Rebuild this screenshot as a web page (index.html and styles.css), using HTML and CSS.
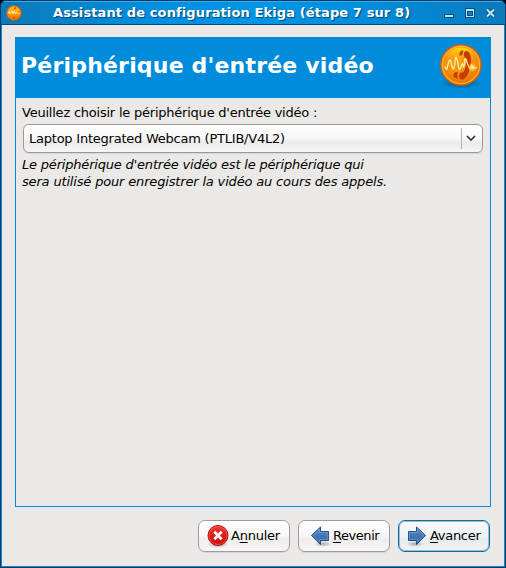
FILE: index.html
```html
<!DOCTYPE html>
<html lang="fr">
<head>
<meta charset="utf-8">
<title>Assistant de configuration Ekiga</title>
<link rel="stylesheet" href="styles.css">
</head>
<body>
<svg width="0" height="0" class="defs" aria-hidden="true">
  <defs>
    <radialGradient id="coin" cx=".45" cy=".3" r=".8"><stop offset="0" stop-color="#f9a51c"/><stop offset=".55" stop-color="#f48c0c"/><stop offset="1" stop-color="#dc6300"/></radialGradient>
    <linearGradient id="gloss" x1="0" y1="0" x2="0" y2="1"><stop offset="0" stop-color="#ffe000" stop-opacity=".95"/><stop offset="1" stop-color="#ffb520" stop-opacity=".1"/></linearGradient>
    <radialGradient id="shade"><stop offset="0" stop-color="#003050" stop-opacity=".6"/><stop offset="1" stop-color="#003050" stop-opacity="0"/></radialGradient>
    <radialGradient id="glow"><stop offset="0" stop-color="#fffbd0"/><stop offset=".3" stop-color="#ffe070" stop-opacity=".8"/><stop offset="1" stop-color="#ffc030" stop-opacity="0"/></radialGradient>
    <linearGradient id="red" x1="0" y1="0" x2="0" y2="1"><stop offset="0" stop-color="#ee4238"/><stop offset=".5" stop-color="#e01b14"/><stop offset="1" stop-color="#cc0d0a"/></linearGradient>
    <linearGradient id="blue" x1="0" y1="0" x2="0" y2="1"><stop offset="0" stop-color="#5b8dc8"/><stop offset="1" stop-color="#2e5f9f"/></linearGradient>
    <radialGradient id="soft"><stop offset="0" stop-color="#000" stop-opacity=".3"/><stop offset="1" stop-color="#000" stop-opacity="0"/></radialGradient>
  </defs>
</svg>
<div class="window">
  <header class="titlebar">
    <svg class="app-icon" width="16" height="16" viewBox="0 0 16 16"><circle cx="8" cy="8" r="7.4" fill="url(#coin)" stroke="#c65c00" stroke-width=".8"/><ellipse cx="8" cy="5.2" rx="5" ry="3.5" fill="#ffc22c" opacity=".6"/><path d="M9.8 2.5 8.5 4M7 13l2-1" stroke="#d04800" stroke-width="1.4"/><path d="M2 8.5 3 6.5l1.2 2.5L6 6l1 3 1.3-2.5L9.5 9l1.2-1.7L12 8.7h2" fill="none" stroke="#fff0a0" stroke-width=".9"/></svg>
    <h1>Assistant de configuration Ekiga (étape 7 sur 8)</h1>
    <svg class="controls" width="56" height="14" viewBox="0 0 56 14">
      <path fill="#064f80" d="M1 8h10v4H1zM22 2h10v10H22z"/>
      <path d="M44 3.500l7 7M51 3.500l-7 7" stroke="#075587" stroke-width="4"/>
      <path fill="#b9e0f5" d="M2 9h8v2H2z"/>
      <path fill="#b9e0f5" d="M23 3h8v8h-8z"/><path fill="#064f80" d="M24 5h6v5h-6z"/><path fill="#0881c7" d="M25 6h4v3h-4z"/>
      <path d="M44 3.500l7 7M51 3.500l-7 7" stroke="#c7e8f8" stroke-width="2"/>
    </svg>
  </header>
  <main class="content">
    <section class="page">
      <div class="banner">
        <h2>Périphérique d'entrée vidéo</h2>
        <svg class="logo" width="48" height="48" viewBox="0 0 48 48">
          <ellipse cx="24" cy="41" rx="21" ry="6" fill="url(#shade)"/>
          <circle cx="24" cy="23" r="20.2" fill="url(#coin)" stroke="#d35b05" stroke-width="1.2"/>
          <circle cx="24" cy="23" r="18.6" fill="none" stroke="#ffb62f" stroke-width="1.1"/>
          <path d="M8.5 16C12 8.5 18 5.5 24 5.5S36 8.500 39.500 16C34 19 29 14 22 15.500S12 17 8.500 16Z" fill="url(#gloss)"/>
          <path d="M27.500 10C30 7.300 34.500 10.500 34 19C33.500 29 29.500 37.500 25 37.700C21.500 37.500 21 31.500 24.500 30.500C27.500 31.500 29.500 24 29.300 16.500C27.500 16.500 26 12.500 27.500 10Z" fill="#c93b00"/>
          <path d="M22.500 13.500C22 10.500 23.500 8 26.500 8.500L25 13.500ZM17 35C15.500 31 18 29.500 21 30.500C20 33 20 34.500 21 37Z" fill="#c93b00"/>
          <path d="M8 24.500C9 27 9.500 28 10 26.500C11 23 11.500 18 13 18C15 19 14 27 16.500 27C18.500 24 17.500 15.500 19 15.500C21.500 18 21 26.500 22.500 27.500C24.500 27 24 22 25.500 21.500L26.500 25C28 24 27 17 28.500 16.500C30 19 31 25 33 26.500L34.500 23L36.500 25.500L40 26" fill="none" stroke="#fff0a0" stroke-width="1.3"/>
          <circle cx="35.500" cy="25.500" r="5" fill="url(#glow)"/>
        </svg>
      </div>
      <div class="form">
        <p class="label">Veuillez choisir le périphérique d'entrée vidéo :</p>
        <button class="combo" type="button"><span class="combo-text">Laptop Integrated Webcam (PTLIB/V4L2)</span><span class="combo-arrow"><svg width="10" height="7" viewBox="0 0 10 7"><path d="M1 1l4 4 4-4" fill="none" stroke="#303030" stroke-width="1.6"/></svg></span></button>
        <p class="hint"><span class="line line-one">Le périphérique d'entrée vidéo est le périphérique qui</span><span class="line line-two">sera utilisé pour enregistrer la vidéo au cours des appels.</span></p>
      </div>
    </section>
    <footer class="actions">
      <button type="button" class="action cancel"><svg width="24" height="24" viewBox="0 0 24 24"><ellipse cx="12" cy="20.500" rx="11" ry="3.500" fill="url(#soft)"/><circle cx="12" cy="11.500" r="10" fill="url(#red)" stroke="#b00c0c"/><circle cx="12" cy="11.500" r="9" fill="none" stroke="#f26b5e" stroke-width=".7"/><path d="M8.300 7.800l7.400 7.400M15.700 7.800l-7.400 7.400" stroke="#fff" stroke-width="2.700"/></svg><span class="annuler">A<u>n</u>nuler</span></button>
      <button type="button" class="action back"><svg width="24" height="24" viewBox="0 0 24 24"><ellipse cx="15" cy="20" rx="9" ry="3" fill="url(#soft)"/><path d="M3.500 11.500 12.500 3v4.500h8v9h-8V20.500Z" fill="url(#blue)" stroke="#234b80"/><path d="M5 11.500 11.700 5.200v3.200h8v7h-8v2.800Z" fill="none" stroke="#7faadb" stroke-width=".6"/></svg><span class="revenir"><u>R</u>evenir</span></button>
      <button type="button" class="action primary"><svg width="24" height="24" viewBox="0 0 24 24"><ellipse cx="10" cy="20" rx="9" ry="3" fill="url(#soft)"/><path d="M20.500 11.500 11.500 3v4.500h-8v9h8V20.500Z" fill="url(#blue)" stroke="#234b80"/><path d="M19 11.500 12.300 5.200v3.200h-8v7h8v2.800Z" fill="none" stroke="#7faadb" stroke-width=".6"/></svg><span class="avancer"><u>A</u>vancer</span></button>
    </footer>
  </main>
</div>
</body>
</html>
```
FILE: styles.css
```css
* { box-sizing: border-box; }
body { margin: 0; background: #000; font: 13px/17px "DejaVu Sans", sans-serif; color: #000; overflow: hidden; }
h1, h2, p { margin: 0; }
button { font: inherit; color: inherit; }
svg { display: block; flex: none; }
.defs { position: absolute; }
.window { width: 506px; height: 568px; display: flex; flex-direction: column; background: #1688c9; border: 1px solid #003c66; border-radius: 6px 6px 0 0; overflow: hidden; }
.titlebar { height: 24px; flex: none; display: flex; align-items: center; padding: 0 6px 0 5px; background: linear-gradient(90deg, #0b7abb, #008fdf 30%, #0095e6 50%, #008fdf 70%, #0b7abb); border-top: 1px solid #3ba9e5; border-bottom: 1px solid #004a7c; }
.titlebar h1 { margin-left: 31px; margin-top: -1px; font-size: 13px; line-height: 17px; font-weight: bold; letter-spacing: .11px; color: #fff; text-shadow: 1px 1px 1px #004576; white-space: nowrap; }
.controls { margin-left: auto; }
.content { flex: 1; margin: 0 1px 1px; padding: 12px 14px 14px 13px; background: #ebe9e7; display: flex; flex-direction: column; }
.page { width: 476px; height: 470px; border: 1px solid #008cda; display: flex; flex-direction: column; }
.banner { height: 60px; flex: none; background: #008cda; display: flex; align-items: center; justify-content: space-between; padding: 0 5px 4px; }
.banner h2 { font-size: 22px; line-height: 30px; letter-spacing: .19px; color: #fff; white-space: nowrap; }
.form { padding: 6px 6px 0; }
.label { height: 20px; white-space: nowrap; letter-spacing: -.225px; }
.combo { width: 460px; height: 29px; margin-left: 1px; padding: 0 0 0 5px; display: flex; align-items: center; text-align: left; border: 1px solid #9d9898; border-radius: 6px; background: linear-gradient(#fff, #f8f7f7 50%, #ecebea 65%, #f7f6f6); box-shadow: 0 1px 0 #d8d6d4; white-space: nowrap; }
.combo-text { letter-spacing: -.23px; }
.combo-arrow { margin-left: auto; width: 21px; height: 21px; border-left: 1px solid #b3afae; display: grid; place-items: center start; padding-left: 4px; }
.hint { margin-top: 3px; font-style: italic; }
.line { display: block; white-space: nowrap; }
.line-one { letter-spacing: -.19px; }
.line-two { letter-spacing: -.165px; }
.actions { display: flex; justify-content: flex-end; gap: 8px; margin-top: 13px; }
.action { width: 92px; height: 32px; padding: 0 0 1px 6px; display: flex; align-items: center; gap: 2px; border: 1px solid #a09b99; border-radius: 7px; background: linear-gradient(#fff, #f8f7f7 50%, #efeeed 60%, #f7f6f6); box-shadow: 0 1px 0 #d8d6d4; white-space: nowrap; }
.cancel { padding-left: 7px; gap: 1px; }
.back { padding-left: 9px; gap: 1px; }
.primary { gap: 1px; border-color: #15699d; background: linear-gradient(#f7fafc, #edf2f5 50%, #e4ebef 60%, #eef3f6); box-shadow: inset 0 0 0 1px #99bed4; }
.annuler { letter-spacing: -.25px; }
.revenir { letter-spacing: -.45px; }
.avancer { letter-spacing: -.3px; }
.action u { text-underline-offset: 2px; text-decoration-thickness: 1px; text-decoration-skip-ink: none; }
```
